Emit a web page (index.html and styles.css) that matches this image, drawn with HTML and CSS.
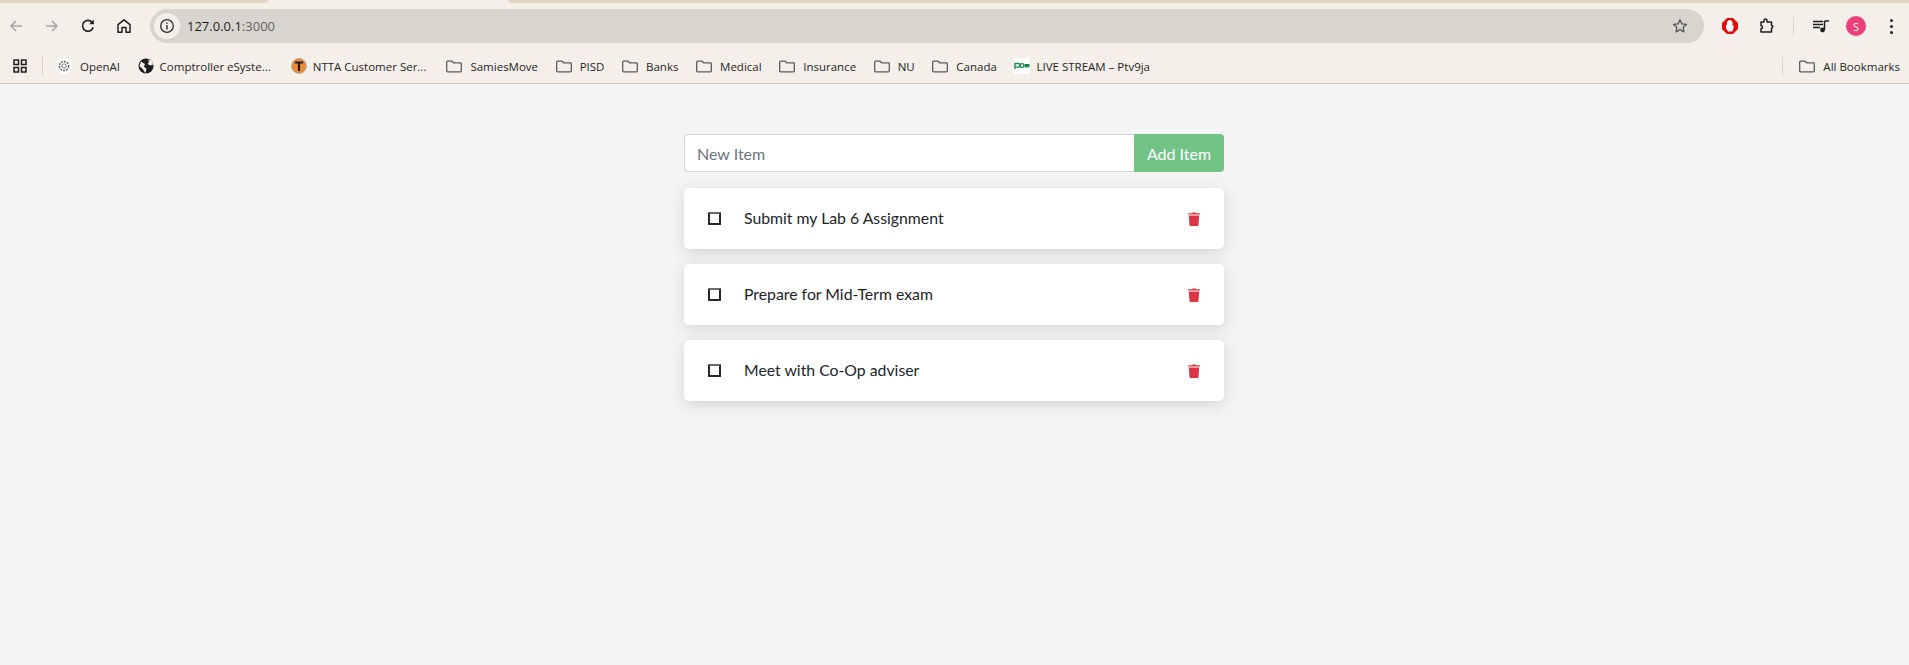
FILE: index.html
```html
<!DOCTYPE html>
<html lang="en">

<head>
    <meta charset="utf-8">
    <title>To Do List</title>
    <link rel="stylesheet" href="styles.css">
</head>

<body>
    <svg class="defs" width="0" height="0">
        <symbol id="folder" viewBox="0 0 16 16">
            <path d="M1.5 3.2h4.6l1.6 1.6h6.8a.8.8 0 0 1 .8.8v7.4a.8.8 0 0 1-.8.8H1.5a.8.8 0 0 1-.8-.8V4a.8.8 0 0 1 .8-.8z" fill="none" stroke="#5c5c5c" stroke-width="1.3"/>
        </symbol>
        <symbol id="trash" viewBox="0 0 12 14">
            <path d="M4.4.4h3.2l.4.8h3.4c.3 0 .6.3.6.6v.6H0v-.6c0-.3.3-.6.6-.6H4z" fill="#dc3545"/>
            <path d="M.8 3.4h10.4l-.7 9.500c0 .6-.5 1.100-1.100 1.100H2.600c-.6 0-1.100-.5-1.100-1.100z" fill="#dc3545"/>
        </symbol>
    </svg>

    <header class="chrome">
        <div class="tabstrip">
            <div class="tab-left"></div>
            <div class="tab-right"></div>
        </div>

        <div class="toolbar">
            <div class="nav">
                <svg class="ico" viewBox="0 0 16 16"><path d="M14 8H3M8 3 3 8l5 5" fill="none" stroke="#a8a5a1" stroke-width="1.5"/></svg>
                <svg class="ico" viewBox="0 0 16 16"><path d="M2 8h11M8 3l5 5-5 5" fill="none" stroke="#a8a5a1" stroke-width="1.5"/></svg>
                <svg class="ico" viewBox="0 0 16 16"><path d="M13.2 9.2A5.4 5.4 0 1 1 12 4.2" fill="none" stroke="#1f1f1f" stroke-width="1.6"/><path d="M13.8 1.6v4.6H9.2z" fill="#1f1f1f"/></svg>
                <svg class="ico" viewBox="0 0 16 16"><path d="M8 1.8 2 6.600v7.600h4V9.600h4v4.600h4V6.600z" fill="none" stroke="#1f1f1f" stroke-width="1.5" stroke-linejoin="round"/></svg>
            </div>
            <div class="omnibox">
                <span class="site-info">
                    <svg width="16" height="16" viewBox="0 0 16 16"><circle cx="8" cy="8" r="6.3" fill="none" stroke="#2b2b2b" stroke-width="1.3"/><path d="M8 7v4.4M8 4.4v1.4" stroke="#2b2b2b" stroke-width="1.4"/></svg>
                </span>
                <span class="url">127.0.0.1<span class="port">:3000</span></span>
                <svg class="star" width="16" height="16" viewBox="0 0 16 16"><path d="m8 1.8 1.900 4.100 4.500.5-3.300 3 .9 4.500L8 11.600l-4 2.300.9-4.500-3.300-3 4.500-.5z" fill="none" stroke="#555" stroke-width="1.3" stroke-linejoin="round"/></svg>
            </div>
            <div class="actions">
                <svg class="adblock" width="16" height="16" viewBox="0 0 16 16"><path d="M5 0h6l5 5v6l-5 5H5l-5-5V5z" fill="#e40b0b"/><path d="M5 7V3.500h1v-1h1V2h1.500v.5h1v1h1V8l1-1v3.500L10 13.500H6L4 10V7z" fill="#fff"/></svg>
                <svg class="puzzle" width="16" height="16" viewBox="0 0 16 16"><path d="M2 4h3V2.600a1.500 1.500 0 0 1 3 0V4h4.500v3.400a1.300 1.300 0 0 1 0 2.600v4H2v-3.200a1.500 1.500 0 0 0 0-3z" fill="none" stroke="#1f1f1f" stroke-width="1.500" stroke-linejoin="round"/></svg>
                <span class="divider"></span>
                <svg class="queue" width="16" height="16" viewBox="0 0 16 16"><path d="M0 3.500h10M0 6.500h10M0 9.500h7" stroke="#1f1f1f" stroke-width="1.300"/><path d="M11.500 3v9" stroke="#1f1f1f" stroke-width="1.500"/><path d="M11.500 3H16" stroke="#1f1f1f" stroke-width="1.500"/><circle cx="9.500" cy="12" r="2.400" fill="#1f1f1f"/></svg>
                <span class="avatar">S</span>
                <span class="dots"><i></i><i></i><i></i></span>
            </div>
        </div>

        <div class="bookmarks">
            <svg class="apps" width="14" height="14" viewBox="0 0 14 14"><path d="M1 1h4.500v4.500H1zM8.500 1H13v4.500H8.500zM1 8.500h4.500V13H1zM8.500 8.500H13V13H8.500z" fill="none" stroke="#1f1f1f" stroke-width="1.500"/></svg>
            <span class="divider apps-divider"></span>

            <a class="mark">
                <svg width="16" height="16" viewBox="0 0 16 16"><circle cx="8" cy="8" r="8" fill="#fff"/><circle cx="8" cy="8" r="4.600" fill="none" stroke="#666" stroke-width="1.500" stroke-dasharray="2 1"/><circle cx="8" cy="8" r="2.200" fill="none" stroke="#777"/></svg>
                OpenAI
            </a>
            <a class="mark mark-cut">
                <svg width="16" height="16" viewBox="0 0 16 16"><circle cx="8" cy="8" r="7.500" fill="#1f1f1f"/><path d="M3 3.500 7 6 6 8.500 8.500 11l-1 4L5 11.500 1.500 8zM10 1.500l1 2.500-1.500 2 3 1.500 2.500-1-1-3.500z" fill="#f4efe9"/></svg>
                Comptroller eSyste...
            </a>
            <a class="mark mark-cut">
                <svg width="16" height="16" viewBox="0 0 16 16"><circle cx="8" cy="8" r="7.400" fill="#f08a35" stroke="#a89f95" stroke-width=".8"/><path d="M3.800 3.500h8.400v2H9.100V13H6.900V5.500H3.800z" fill="#1f1f1f"/></svg>
                NTTA Customer Ser...
            </a>
            <a class="mark"><svg width="16" height="16"><use href="#folder"/></svg>SamiesMove</a>
            <a class="mark"><svg width="16" height="16"><use href="#folder"/></svg>PISD</a>
            <a class="mark"><svg width="16" height="16"><use href="#folder"/></svg>Banks</a>
            <a class="mark"><svg width="16" height="16"><use href="#folder"/></svg>Medical</a>
            <a class="mark"><svg width="16" height="16"><use href="#folder"/></svg>Insurance</a>
            <a class="mark"><svg width="16" height="16"><use href="#folder"/></svg>NU</a>
            <a class="mark"><svg width="16" height="16"><use href="#folder"/></svg>Canada</a>
            <a class="mark mark-tight">
                <svg width="16" height="16" viewBox="0 0 16 16"><path d="M0 0h16v16H0z" fill="#fff"/><path d="M1 11V5.500h3.200a1.800 1.800 0 0 1 0 3.600H1" fill="none" stroke="#1a8a4a" stroke-width="1.400"/><circle cx="8" cy="7.500" r="1.900" fill="none" stroke="#1a8a4a" stroke-width="1.200"/><path d="M10.500 6h5v3.400h-5z" fill="#1a8a4a"/></svg>
                LIVE STREAM – Ptv9ja
            </a>

            <span class="divider all-divider"></span>
            <a class="mark"><svg width="16" height="16"><use href="#folder"/></svg>All Bookmarks</a>
        </div>
    </header>

    <main class="todo">
        <form class="add-form">
            <input class="new-item" type="text" placeholder="New Item">
            <button class="add-btn" type="button">Add Item</button>
        </form>

        <ul class="items">
            <li class="item">
                <input class="check" type="checkbox">
                <span class="item-text">Submit my Lab 6 Assignment</span>
                <svg class="trash" width="12" height="14"><use href="#trash"/></svg>
            </li>
            <li class="item">
                <input class="check" type="checkbox">
                <span class="item-text">Prepare for Mid-Term exam</span>
                <svg class="trash" width="12" height="14"><use href="#trash"/></svg>
            </li>
            <li class="item">
                <input class="check" type="checkbox">
                <span class="item-text">Meet with Co-Op adviser</span>
                <svg class="trash" width="12" height="14"><use href="#trash"/></svg>
            </li>
        </ul>
    </main>
</body>

</html>
```

FILE: styles.css
```css
* {
    box-sizing: border-box;
}

html,
body {
    height: 100%;
}

body {
    margin: 0;
    overflow: hidden;
    background: #f4f4f4;
    font-family: "Lato", "Open Sans", sans-serif;
    color: #212529;
}

.defs {
    display: block;
    height: 0;
}

/* browser chrome */
.chrome {
    background: #f4efe9;
    border-bottom: 1px solid #cbc8c2;
    height: 84px;
    font-family: "Open Sans", "Noto Sans", sans-serif;
    color: #1f1f1f;
}

.tabstrip {
    display: flex;
    justify-content: space-between;
    height: 3px;
}

.tab-left,
.tab-right {
    background: #e3d3bf;
}

.tab-left {
    width: 268px;
    border-bottom-right-radius: 3px;
}

.tab-right {
    width: 1401px;
    border-bottom-left-radius: 3px;
}

.toolbar {
    display: flex;
    align-items: center;
    height: 46px;
    padding: 0 0 0 8px;
}

.nav {
    display: flex;
    gap: 20px;
    width: 142px;
}

.ico {
    width: 16px;
    height: 16px;
}

.omnibox {
    display: flex;
    align-items: center;
    width: 1554px;
    height: 34px;
    border-radius: 17px;
    background: #d8d5cf;
    padding: 0 16px 0 4px;
}

.site-info {
    display: flex;
    align-items: center;
    justify-content: center;
    width: 26px;
    height: 26px;
    border-radius: 50%;
    background: #f4efe9;
}

.url {
    margin-left: 7px;
    font-size: 13px;
    flex: 1;
}

.port {
    color: #5f5f5f;
}

.actions {
    display: flex;
    align-items: center;
    flex: 1;
    padding-left: 18px;
}

.puzzle {
    margin-left: 21px;
}

.actions .divider {
    margin-left: 18px;
    margin-right: 19px;
}

.avatar {
    display: flex;
    align-items: center;
    justify-content: center;
    width: 20px;
    height: 20px;
    margin-left: 17px;
    border-radius: 50%;
    background: #ee3f7c;
    color: #fff;
    font-size: 11px;
}

.dots {
    display: flex;
    flex-direction: column;
    gap: 3px;
    margin-left: 24px;
}

.dots i {
    display: block;
    width: 3px;
    height: 3px;
    border-radius: 50%;
    background: #1f1f1f;
}

.divider {
    display: block;
    width: 1px;
    height: 19px;
    background: #e0d2c1;
}

.bookmarks {
    display: flex;
    align-items: center;
    height: 34px;
    padding-left: 13px;
    font-size: 11.5px;
}

.apps-divider {
    margin: 0 13px 0 15px;
}

.mark {
    display: flex;
    align-items: center;
    gap: 8px;
    margin-right: 17.6px;
    white-space: nowrap;
}

.mark-cut {
    gap: 6px;
    margin-right: 20px;
}

.mark-tight {
    gap: 6px;
}

.all-divider {
    margin-left: auto;
    margin-right: 16px;
}

.bookmarks .mark:last-child {
    margin-right: 9px;
}

/* todo list */
.todo {
    width: 541px;
    margin: 0 auto;
    padding: 50px 1px 0 0;
}

.add-form {
    display: flex;
    height: 38px;
    margin: 0 0 16px;
}

.new-item {
    flex: 1;
    min-width: 0;
    padding: 6px 12px;
    border: 1px solid #ced4da;
    border-right: 0;
    border-radius: 4px 0 0 4px;
    background: #fff;
    font: 16px "Lato", sans-serif;
    color: #495057;
}

.new-item::placeholder {
    color: #6c757d;
    opacity: 1;
}

.add-btn {
    width: 90px;
    border: 0;
    border-radius: 0 4px 4px 0;
    background: #72c486;
    color: #fff;
    font: 16px "Lato", sans-serif;
}

.items {
    display: flex;
    flex-direction: column;
    gap: 15px;
    list-style: none;
    margin: 0;
    padding: 0;
}

.item {
    display: flex;
    align-items: center;
    height: 61px;
    padding: 0 24px;
    background: #fff;
    border-radius: 5px;
    box-shadow: 0 4px 16px rgba(0, 0, 0, .13);
}

.check {
    appearance: none;
    width: 13px;
    height: 13px;
    margin: 0 23px 0 0;
    border: 2px solid #26262c;
    border-top-color: #6a6a6e;
    border-radius: 1px;
    background: #fff;
}

.item-text {
    flex: 1;
    padding-bottom: 2px;
    font-size: 15.8px;
}
```
